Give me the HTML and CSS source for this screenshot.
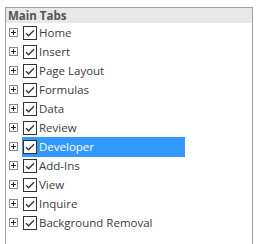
FILE: index.html
```html
<!DOCTYPE html>
<html lang="en">
<head>
  <meta charset="UTF-8" />
  <title>Main Tabs</title>
  <link rel="stylesheet" href="styles.css">
</head>
<body>
  <div class="panel">
    <div class="header">Main Tabs</div>
    <ul class="tree">
      <li class="row"><span class="plus"></span><span class="item"><span class="check"></span><span class="label">Home</span></span></li>
      <li class="row"><span class="plus"></span><span class="item"><span class="check"></span><span class="label">Insert</span></span></li>
      <li class="row"><span class="plus"></span><span class="item"><span class="check"></span><span class="label">Page Layout</span></span></li>
      <li class="row"><span class="plus"></span><span class="item"><span class="check"></span><span class="label">Formulas</span></span></li>
      <li class="row"><span class="plus"></span><span class="item"><span class="check"></span><span class="label">Data</span></span></li>
      <li class="row"><span class="plus"></span><span class="item"><span class="check"></span><span class="label">Review</span></span></li>
      <li class="row"><span class="plus"></span><span class="item selected"><span class="check"></span><span class="label">Developer</span></span></li>
      <li class="row"><span class="plus"></span><span class="item"><span class="check"></span><span class="label">Add-Ins</span></span></li>
      <li class="row"><span class="plus"></span><span class="item"><span class="check"></span><span class="label">View</span></span></li>
      <li class="row"><span class="plus"></span><span class="item"><span class="check"></span><span class="label">Inquire</span></span></li>
      <li class="row"><span class="plus"></span><span class="item"><span class="check"></span><span class="label">Background Removal</span></span></li>
    </ul>
  </div>

  <script>
    // draw the expander and checkbox glyphs
    const plusSvg = '<svg width="9" height="9" viewBox="0 0 9 9"><rect x="0.5" y="0.5" width="8" height="8" fill="#fff" stroke="#8a8a8a"/><path d="M2 4.5h5M4.5 2v5" stroke="#222" stroke-width="1"/></svg>';
    const checkSvg = '<svg width="14" height="14" viewBox="0 0 14 14"><rect x="0.5" y="0.5" width="13" height="13" fill="#fff" stroke="#333"/><path d="M3 7.2l2.6 2.6L11 4.2" fill="none" stroke="#333" stroke-width="1.3"/></svg>';
    document.querySelectorAll(".plus").forEach(el => el.innerHTML = plusSvg);
    document.querySelectorAll(".check").forEach(el => el.innerHTML = checkSvg);
  </script>
</body>
</html>
```
FILE: styles.css
```css
body {
  margin: 0;
  background: #fff;
  font-family: "Open Sans", "Liberation Sans", sans-serif;
}
.panel {
  margin: 7px 0 0 5px;
  width: 248px;
  height: 260px;
  border: 1px solid #a0a0a0;
  border-bottom: none;
  box-sizing: border-box;
}
.header {
  height: 15px;
  line-height: 15px;
  background: #e8e8e8;
  font-size: 11.5px;
  font-weight: bold;
  color: #555;
  padding-left: 2px;
}
.tree {
  list-style: none;
  margin: 0;
  padding: 0;
}
.row {
  height: 19px;
  display: flex;
  align-items: center;
  padding-left: 3px;
}
.plus {
  display: flex;
  width: 9px;
  height: 9px;
  margin-right: 4px;
}
.item {
  display: flex;
  align-items: center;
  width: 162px;
  height: 20px;
  padding-left: 1px;
}
.item.selected {
  background: #3399ff;
  color: #fff;
}
.check {
  display: flex;
  width: 14px;
  height: 14px;
  margin-right: 2px;
}
.label {
  font-size: 11.5px;
  color: #3c3c3c;
  white-space: nowrap;
}
.selected .label {
  color: #fff;
}
```
